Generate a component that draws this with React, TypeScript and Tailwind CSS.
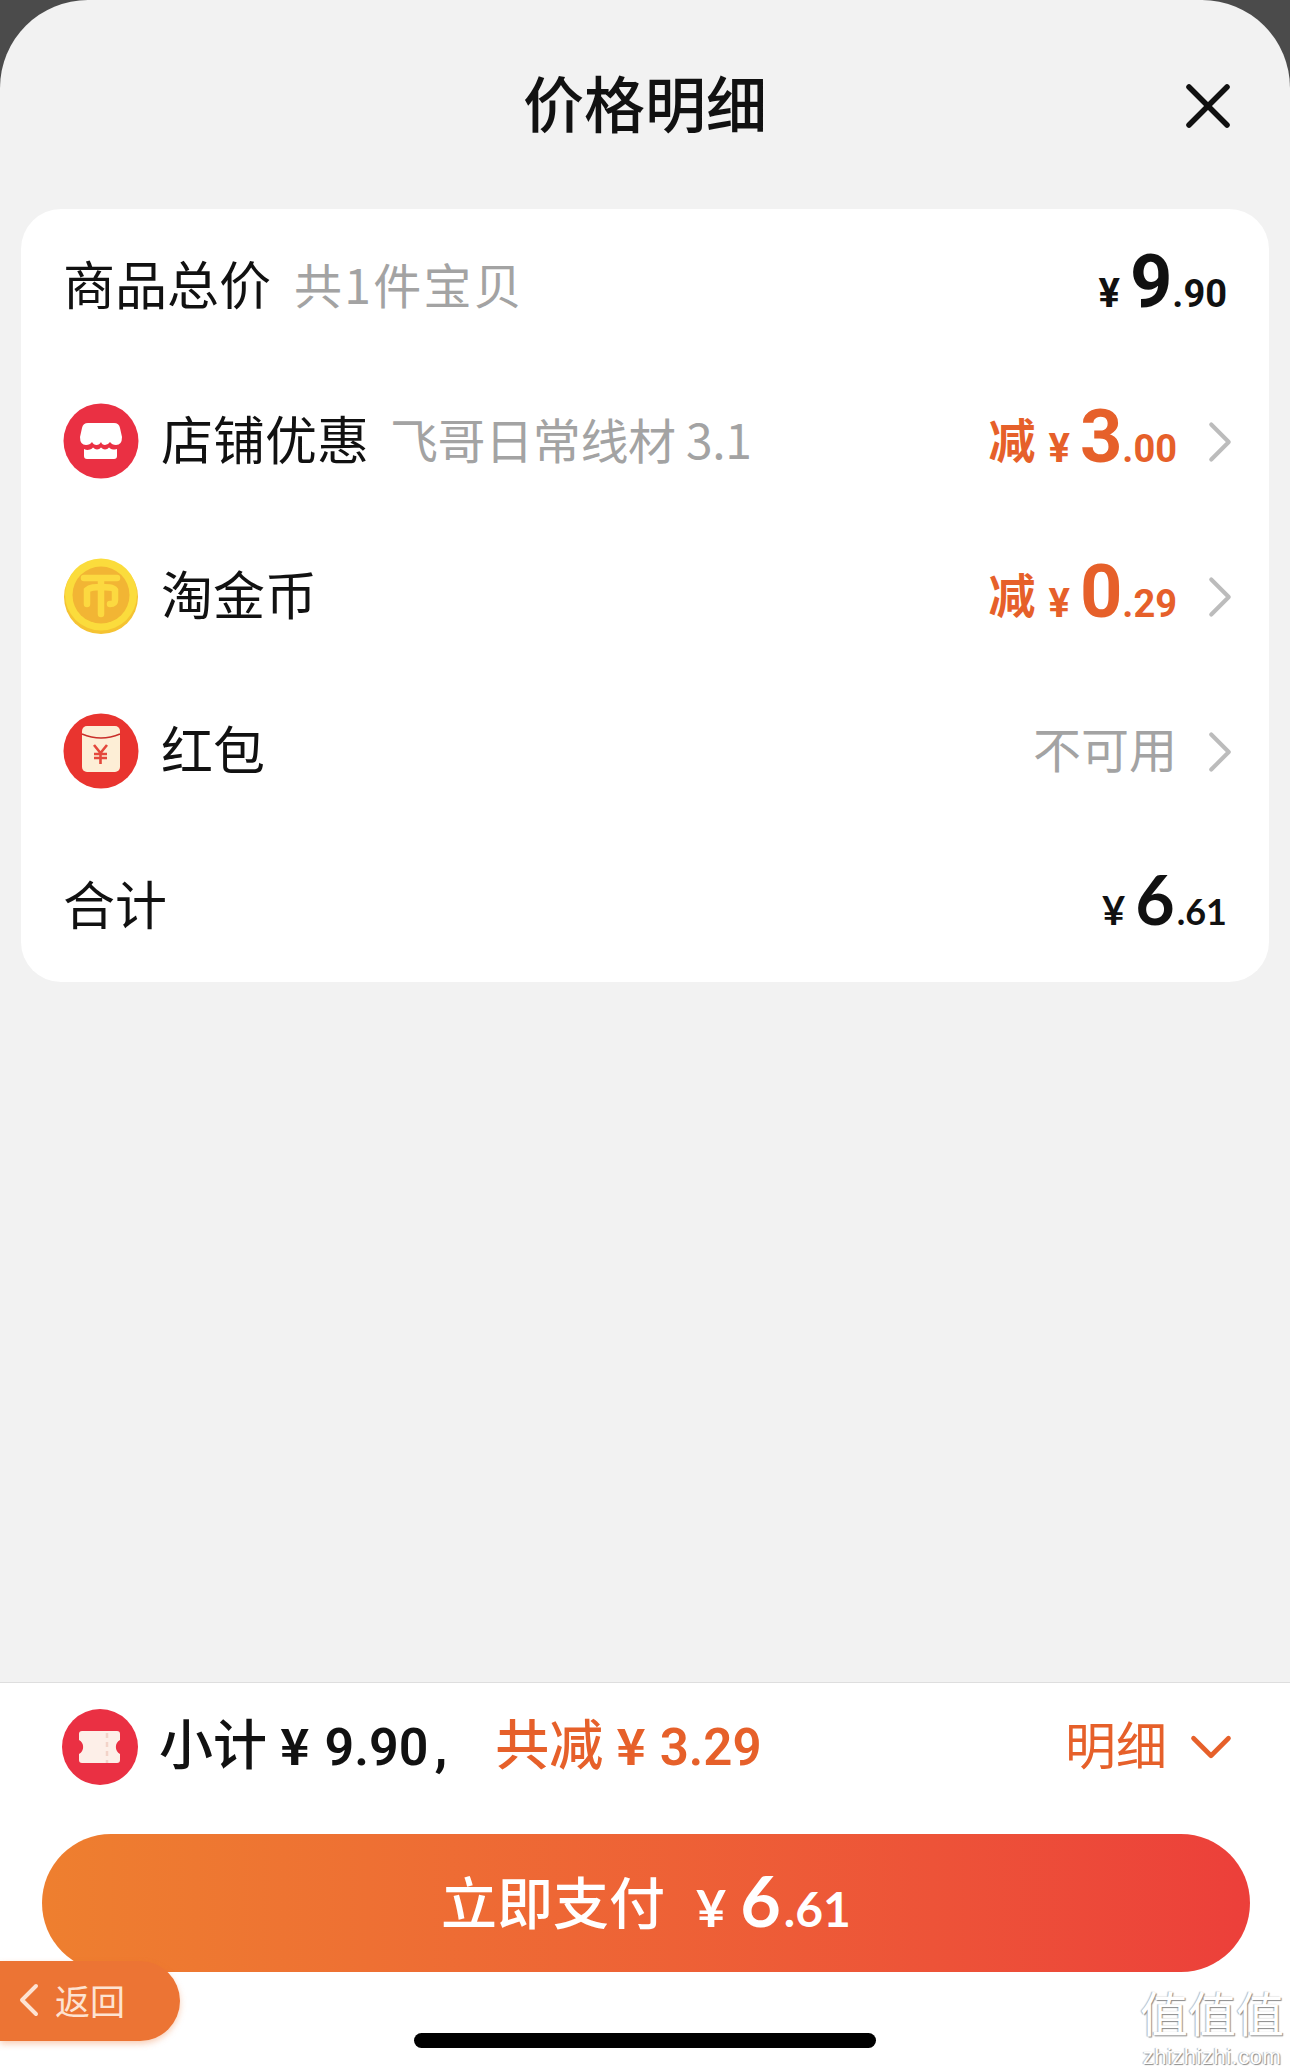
import { ChevronDown, ChevronLeft, ChevronRight, X } from 'lucide-react';

const cjk = "font-['Noto_Sans_CJK_SC','Noto_Sans',sans-serif]";
const roboto = "font-['Roboto','Liberation_Sans',sans-serif]";
const lato = "font-['Lato','Liberation_Sans',sans-serif]";

function StoreIcon() {
  return (
    <svg viewBox="0 0 76 76" className="w-[76px] h-[76px] shrink-0">
      <circle cx="38" cy="38" r="37.5" fill="#ea3043" />
      <path
        d="M25 20h26q5 0 6 5l2 9q0 8-6 8q-4 0-6-3q-2 3-5 3q-3 0-4-3q-1.500 3-4.500 3q-3 0-4.500-3q-2 3-6 3q-6 0-6-8l2-9q1-5 6-5z"
        fill="#fff"
      />
      <path
        d="M21 46q3 1.500 6 0.500q2-.5 3-2q2 2 4 2q2.500 0 4-2q2 2 4 2q2.500 0 4-2q2 2 4 2q2 0 4-.5v7q0 3-3 3h-27q-3 0-3-3z"
        fill="#fff"
      />
    </svg>
  );
}

function CoinIcon() {
  return (
    <svg viewBox="0 0 76 76" className="w-[76px] h-[76px] shrink-0">
      <circle cx="38" cy="39" r="37" fill="#f5c332" />
      <circle cx="38" cy="36.500" r="36" fill="#fbdc3c" />
      <circle cx="38" cy="37" r="28.500" fill="#f2b534" />
      <path
        d="M21 20h33M38 20v9M38 29c-6 0-11 0-14 3v14M38 29c6 0 12 0 14 3v10c0 3-2 4-5 4M38 31v25"
        fill="none"
        stroke="#fcd940"
        strokeWidth="6.500"
        strokeLinecap="round"
      />
    </svg>
  );
}

function PacketIcon() {
  return (
    <svg viewBox="0 0 76 76" className="w-[76px] h-[76px] shrink-0">
      <circle cx="38" cy="38" r="37.500" fill="#e9342f" />
      <rect x="19" y="13" width="38" height="46" rx="5" fill="#fdeed6" />
      <path d="M19 21q19 8 38 0" fill="none" stroke="#c92f2a" strokeWidth="1.500" />
      <path
        d="M31 32l6.500 8 6.500-8M31 41h13M31 45h13M37.500 40v11"
        fill="none"
        stroke="#e4483c"
        strokeWidth="2.600"
      />
    </svg>
  );
}

function TicketIcon() {
  return (
    <svg viewBox="0 0 76 76" className="w-[76px] h-[76px] shrink-0">
      <circle cx="38" cy="38" r="38" fill="#ea3043" />
      <path
        d="M20 22h35q3 0 3 3v6a8 8 0 0 0 0 14v6q0 3-3 3h-35q-3 0-3-3v-6a8 8 0 0 0 0-14v-6q0-3 3-3z"
        fill="#fdefe8"
      />
      <path d="M45 24v30" stroke="#f3d3c8" strokeWidth="2.500" strokeDasharray="5 4" />
    </svg>
  );
}

function Price({
  int,
  dec,
  tone,
  font,
  intClass = 'text-[74px]',
  decClass = 'text-[38px]',
}: {
  int: string;
  dec: string;
  tone: string;
  font: string;
  intClass?: string;
  decClass?: string;
}) {
  return (
    <span className={`flex items-baseline font-bold leading-none ${tone} ${font}`}>
      <span className="text-[40px] mr-[10px]">¥</span>
      <span className={intClass}>{int}</span>
      <span className={decClass}>.{dec}</span>
    </span>
  );
}

function Row({
  icon,
  label,
  note,
  noteClass,
  right,
  arrow,
}: {
  icon?: React.ReactNode;
  label: string;
  note?: string;
  noteClass?: string;
  right: React.ReactNode;
  arrow?: boolean;
}) {
  return (
    <div className="h-[155px] flex items-center pl-[42px] pr-[42px] pb-[8px]">
      {icon && <span className="mr-[22px] translate-y-[3px]">{icon}</span>}
      <span className="text-[52px] text-[#111] leading-none">{label}</span>
      {note && (
        <span className={`ml-[21px] text-[48px] text-[#a3a3a3] leading-none ${noteClass ?? ''}`}>{note}</span>
      )}
      <div className="ml-auto flex items-center pb-[2px]">
        {right}
        {arrow && (
          <ChevronRight
            className="w-[70px] h-[70px] ml-[8px] mr-[-28px] text-[#bcbcbc] translate-y-[5px]"
            strokeWidth={1.4}
          />
        )}
      </div>
    </div>
  );
}

function Discount({ int, dec }: { int: string; dec: string }) {
  return (
    <span className="flex items-baseline text-[#e6602a]">
      <span className="text-[47px] font-semibold leading-none mr-[13px] -translate-y-[4px]">减</span>
      <Price int={int} dec={dec} tone="text-[#e6602a]" font={roboto} />
    </span>
  );
}

export default function App() {
  return (
    <div className={`relative w-[1290px] h-[2072px] overflow-hidden bg-[#4b4b4b] ${cjk}`}>
      <div className="h-full flex flex-col rounded-t-[88px] bg-[#f2f2f2]">
        <header className="h-[209px] shrink-0 relative flex justify-center pt-[64px]">
          <h1 className="text-[61px] font-medium leading-[76px] text-[#111]">价格明细</h1>
          <X className="absolute right-[44px] top-[68px] w-[76px] h-[76px] text-[#111]" strokeWidth={1.75} />
        </header>

        <section className="mx-[21px] h-[773px] shrink-0 bg-white rounded-[40px]">
          <Row
            label="商品总价"
            note="共1件宝贝"
            noteClass="pl-[2px] tracking-[2.3px]"
            right={<Price int="9" dec="90" tone="text-[#111]" font={roboto} />}
          />
          <Row
            icon={<StoreIcon />}
            label="店铺优惠"
            note="飞哥日常线材 3.1"
            noteClass="tracking-[-0.4px]"
            right={<Discount int="3" dec="00" />}
            arrow
          />
          <Row icon={<CoinIcon />} label="淘金币" right={<Discount int="0" dec="29" />} arrow />
          <Row
            icon={<PacketIcon />}
            label="红包"
            right={<span className="text-[48px] text-[#a3a3a3] leading-none">不可用</span>}
            arrow
          />
          <Row
            label="合计"
            right={
              <Price
                int="6"
                dec="61"
                tone="text-[#111] -translate-y-[3px]"
                font={lato}
                intClass="text-[68px]"
                decClass="text-[36px] ml-[2px]"
              />
            }
          />
        </section>

        <div className="flex-1" />

        <footer className="h-[390px] shrink-0 bg-white border-t border-[#dedede]">
          <div className="h-[128px] mb-[23px] flex items-center pl-[62px] pr-[58px]">
            <TicketIcon />
            <span className="ml-[21px] flex items-baseline text-[54px] font-medium text-[#111] leading-none -translate-y-[3px]">
              小计
              <span className="ml-[13px] text-[50px] font-semibold">¥</span>
              <span className={`ml-[15px] text-[52px] font-semibold ${roboto}`}>9.90</span>
              <span className={`ml-[6px] text-[52px] font-bold ${roboto}`}>,</span>
            </span>
            <span className="ml-[48px] flex items-baseline text-[54px] font-medium text-[#e6602a] leading-none -translate-y-[3px]">
              共减
              <span className="ml-[13px] text-[50px] font-semibold">¥</span>
              <span className={`ml-[14px] text-[51px] font-semibold ${roboto}`}>3.29</span>
            </span>
            <span className="ml-auto text-[51px] text-[#e6602a] leading-none -translate-y-[4px]">明细</span>
            <ChevronDown className="w-[70px] h-[70px] ml-[9px] mr-[-14px] text-[#e6602a]" strokeWidth={1.6} />
          </div>
          <button className="ml-[42px] w-[1208px] h-[138px] rounded-full bg-gradient-to-r from-[#ee7f2f] to-[#ec3f3a] flex items-center justify-center text-white pb-[6px]">
            <span className="text-[56px] font-medium leading-none">立即支付</span>
            <span className={`ml-[31px] flex items-baseline font-bold leading-none ${lato}`}>
              <span className="text-[52px] mr-[14px]">¥</span>
              <span className="text-[70px]">6</span>
              <span className="text-[48px] ml-[3px]">.61</span>
            </span>
          </button>
        </footer>
      </div>

      <div className="absolute left-0 top-[1961px] w-[180px] h-[80px] flex items-center pb-[3px] rounded-r-[40px] bg-[#ec7434] shadow-[0_3px_6px_rgba(236,118,51,0.35)] text-[#fde3d2]">
        <ChevronLeft className="w-[56px] h-[56px] ml-[1px]" strokeWidth={1.7} />
        <span className="ml-[-2px] text-[35px] leading-none">返回</span>
      </div>

      <div className="absolute left-[414px] top-[2033px] w-[462px] h-[15px] rounded-full bg-black" />

      <div className="absolute left-[1140px] top-[1987px] w-[144px] text-center text-white font-['Liberation_Sans','Noto_Sans_CJK_SC',sans-serif] [text-shadow:1px_1px_1px_#8a8a8a,-1px_0_1px_#b5b5b5]">
        <div className="text-[48px] leading-[58px]">值值值</div>
        <div className="mt-[1px] text-[22px] leading-[22px] tracking-[0.5px]">zhizhizhi.com</div>
      </div>
    </div>
  );
}
